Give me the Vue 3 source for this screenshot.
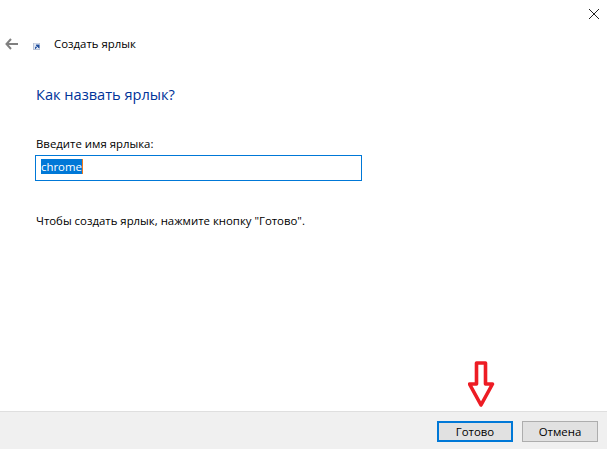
<script setup>
const name = 'chrome'
</script>

<template>
  <div class="dialog">
    <div class="titlebar">
      <svg class="close" width="10" height="10" viewBox="0 0 10 10"><path d="M0 0L10 10M10 0L0 10" stroke="#222" stroke-width="1" fill="none"/></svg>
    </div>
    <div class="nav">
      <svg class="back" width="13" height="12" viewBox="0 0 13 12"><path d="M6 1L1.5 6L6 11M2 6H13" stroke="#808080" stroke-width="2" fill="none"/></svg>
      <svg class="shortcut" width="7" height="7" viewBox="0 0 7 7"><rect x="0" y="0" width="7" height="7" fill="#b9c3d6"/><rect x="1" y="0.5" width="5" height="5.5" fill="#dfe6f2"/><path d="M2.5 6V4H4M3 2h3v3z" stroke="#1f4e9e" stroke-width="0.8" fill="#1f4e9e"/></svg>
      <span class="nav-title">Создать ярлык</span>
    </div>
    <main class="content">
      <h1 class="heading">Как назвать ярлык?</h1>
      <label class="label">Введите имя ярлыка:</label>
      <div class="input"><span class="selected">{{ name }}</span></div>
      <p class="hint">Чтобы создать ярлык, нажмите кнопку "Готово".</p>
    </main>
    <footer class="footer">
      <button class="btn primary">Готово</button>
      <button class="btn">Отмена</button>
    </footer>
    <svg class="arrow" width="27" height="47" viewBox="0 0 27 47"><path d="M8.5 2H17.5V23H24.5L13 44L1.5 23H8.5Z" fill="#fff" stroke="#ed1c24" stroke-width="3.6" stroke-linejoin="round"/></svg>
  </div>
</template>

<style>
html, body { margin: 0; background: #fff; }
</style>

<style scoped>
.dialog {
  position: relative;
  width: 607px;
  height: 449px;
  display: flex;
  flex-direction: column;
  overflow: hidden;
  background: #fff;
  font-family: "Open Sans", "Noto Sans", sans-serif;
  font-size: 11.4px;
  color: #000;
}
.titlebar {
  height: 29px;
  display: flex;
  justify-content: flex-end;
  align-items: flex-start;
  padding: 9px 8px 0 0;
  box-sizing: border-box;
  flex: none;
}
.close { display: block; }
.nav {
  height: 30px;
  flex: none;
  display: flex;
  align-items: center;
  padding-left: 5px;
}
.back { margin-top: -1px; }
.shortcut { margin: 4px 0 0 15px; }
.nav-title { margin-left: 14px; line-height: 16px; }
.content {
  flex: 1;
  padding: 0 0 0 35px;
}
.heading {
  margin: 25px 0 0 1px;
  font-size: 14.6px;
  font-weight: 400;
  line-height: 20px;
  color: #003399;
}
.label {
  display: block;
  margin: 32px 0 0 1px;
  line-height: 16px;
}
.input {
  box-sizing: border-box;
  width: 327px;
  height: 26px;
  margin-top: 3px;
  border: 1px solid #0078d7;
  padding: 3px 0 0 5px;
  display: flex;
  align-items: flex-start;
}
.selected {
  background: #0078d7;
  color: #fff;
  height: 15px;
  line-height: 15px;
  border-right: 1px solid #f07a1a;
}
.hint {
  margin: 32px 0 0 1px;
  line-height: 16px;
}
.footer {
  height: 38px;
  flex: none;
  box-sizing: border-box;
  border-top: 1px solid #dfdfdf;
  background: #f0f0f0;
  display: flex;
  justify-content: flex-end;
  align-items: flex-start;
  gap: 9px;
  padding: 9px 9px 0 0;
}
.btn {
  box-sizing: border-box;
  width: 76px;
  height: 21px;
  margin: 0;
  padding: 0;
  border: 1px solid #adadad;
  background: #e1e1e1;
  font: inherit;
  line-height: 17px;
  color: #000;
}
.primary {
  border: 2px solid #0078d7;
}
.arrow {
  position: absolute;
  left: 468px;
  top: 361px;
}
</style>
